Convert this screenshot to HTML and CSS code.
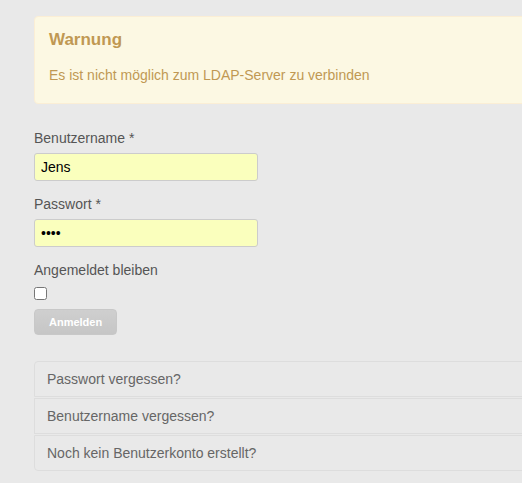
FILE: index.html
```html
<!DOCTYPE html>
<html lang="de">
<head>
    <meta charset="UTF-8">
    <meta name="viewport" content="width=device-width, initial-scale=1.0">
    <title>Anmelden</title>
    <link rel="stylesheet" href="styles.css">
</head>
<body>

    <div class="page">
        <div class="alert">
            <h4 class="alert-heading">Warnung</h4>
            <p>Es ist nicht möglich zum LDAP-Server zu verbinden</p>
        </div>

        <form class="login-form">
            <div class="field">
                <label for="username">Benutzername *</label>
                <input type="text" id="username" value="Jens">
            </div>
            <div class="field">
                <label for="password">Passwort *</label>
                <input type="password" id="password" value="test">
            </div>
            <div class="field remember">
                <label for="remember">Angemeldet bleiben</label>
                <input type="checkbox" id="remember">
            </div>
            <button type="button" class="btn-login">Anmelden</button>
        </form>

        <ul class="nav-stacked">
            <li><a href="#">Passwort vergessen?</a></li>
            <li><a href="#">Benutzername vergessen?</a></li>
            <li><a href="#">Noch kein Benutzerkonto erstellt?</a></li>
        </ul>
    </div>

</body>
</html>
```

FILE: styles.css
```css
body {
    margin: 0;
    background-color: #e9e9e9;
    font-family: "Liberation Sans", Arial, sans-serif;
    font-size: 14px;
    line-height: 20px;
    color: #555;
    overflow: hidden;
}

.page {
    width: 540px;
    padding: 16px 0 0 34px;
}

/* Warnung */
.alert {
    background-color: #fcf8e3;
    border: 1px solid #fbeed5;
    color: #c09853;
    padding: 13px 14px 18px;
    border-radius: 4px 0 0 4px;
}

.alert-heading {
    margin: 0 0 15px;
    font-size: 17px;
    font-weight: bold;
    line-height: 20px;
}

.alert p {
    margin: 0;
}

/* Anmeldeformular */
.login-form {
    margin-top: 24px;
}

.field {
    margin-bottom: 13px;
}

label {
    display: block;
    margin-bottom: 5px;
}

input[type="text"],
input[type="password"] {
    display: block;
    box-sizing: border-box;
    width: 224px;
    height: 28px;
    padding: 4px 6px;
    margin: 0;
    border: 1px solid #ccc;
    border-radius: 3px;
    background-color: #faffbd;
    font-family: inherit;
    font-size: 14px;
    color: #000;
}

.remember {
    margin-bottom: 9px;
}

.remember label {
    margin-bottom: 7px;
}

input[type="checkbox"] {
    display: block;
    width: 13px;
    height: 13px;
    margin: 0;
}

.btn-login {
    height: 26px;
    padding: 0 14px;
    border: 1px solid #c8c8c8;
    border-radius: 4px;
    background: linear-gradient(#cfcfcf, #c6c6c6);
    color: #fff;
    font-family: inherit;
    font-size: 11px;
    font-weight: bold;
}

/* Links unter dem Formular */
.nav-stacked {
    list-style: none;
    margin: 26px 0 0;
    padding: 0;
}

.nav-stacked li {
    margin-bottom: 1px;
}

.nav-stacked a {
    display: block;
    padding: 7px 12px;
    border: 1px solid #ddd;
    color: #666;
    text-decoration: none;
}

.nav-stacked li:first-child a {
    border-radius: 4px 0 0 0;
}

.nav-stacked li:last-child a {
    border-radius: 0 0 0 4px;
}
```
